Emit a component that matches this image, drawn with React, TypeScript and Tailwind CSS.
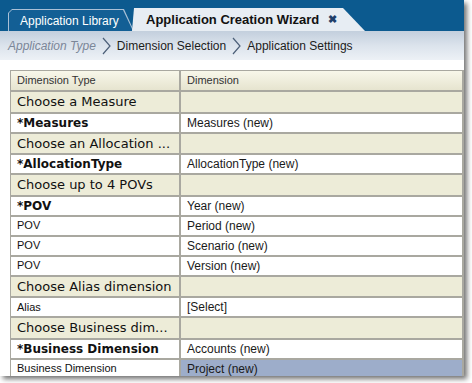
import React from "react";

type Row =
  | { kind: "section"; label: string }
  | { kind: "item"; label: string; value: string; bold?: boolean; selected?: boolean };

const rows: Row[] = [
  { kind: "section", label: "Choose a Measure" },
  { kind: "item", label: "*Measures", value: "Measures (new)", bold: true },
  { kind: "section", label: "Choose an Allocation ..." },
  { kind: "item", label: "*AllocationType", value: "AllocationType (new)", bold: true },
  { kind: "section", label: "Choose up to 4 POVs" },
  { kind: "item", label: "*POV", value: "Year (new)", bold: true },
  { kind: "item", label: "POV", value: "Period (new)" },
  { kind: "item", label: "POV", value: "Scenario (new)" },
  { kind: "item", label: "POV", value: "Version (new)" },
  { kind: "section", label: "Choose Alias dimension" },
  { kind: "item", label: "Alias", value: "[Select]" },
  { kind: "section", label: "Choose Business dim..." },
  { kind: "item", label: "*Business Dimension", value: "Accounts (new)", bold: true },
  { kind: "item", label: "Business Dimension", value: "Project (new)", selected: true },
];

const tahoma = "font-['Liberation_Sans',Arial,sans-serif]";
const verdana = "font-['DejaVu_Sans',Verdana,sans-serif]";
const cell = "border border-[#a9a8a0] h-[20px] px-[6px] whitespace-nowrap overflow-hidden";

const Chevron = () => (
  <svg width="9" height="18" viewBox="0 0 9 18" className="mx-[6px] shrink-0">
    <path d="M1 1 L8 9 L1 17" fill="none" stroke="#4c5f78" strokeWidth="1.2" />
  </svg>
);

const App = () => {
  return (
    <div className="w-[472px] h-[383px] bg-white">
      <div className="w-[464px] h-[376px] overflow-hidden bg-white shadow-[3px_3px_5px_rgba(0,0,0,0.55)]">
        {/* tab strip */}
        <div className="h-[31px] bg-[#0c5a8f] flex items-end pl-[8px]">
          <div className="relative h-[22px] w-[126px] bg-[#a9c0d6] [clip-path:polygon(0_4px,4px_0,116px_0,126px_100%,0_100%)]">
            <div
              className={`absolute inset-[1px] bottom-0 bg-[#135f95] [clip-path:polygon(0_3px,3px_0,114px_0,124px_100%,0_100%)] flex items-center pl-[11px] text-white text-[12px] ${tahoma}`}
            >
              Application Library
            </div>
          </div>
          <div
            className={`h-[23px] w-[233px] -ml-[2px] bg-[#e7edf3] [clip-path:polygon(0_100%,2px_0,211px_0,233px_100%)] flex items-center pl-[14px] text-[13px] font-bold text-[#111] ${tahoma}`}
          >
            Application Creation Wizard
            <span className="ml-[9px] text-[11px] text-[#1f3f6a]">✖</span>
          </div>
        </div>

        {/* train / breadcrumb */}
        <div
          className={`h-[29px] bg-gradient-to-b from-[#c3cfdd] via-[#dbe3ec] to-[#edf1f6] flex items-center pl-[8px] text-[12px] ${tahoma}`}
        >
          <span className="italic text-[#7b8698]">Application Type</span>
          <Chevron />
          <span className="text-[#1c1c1c]">Dimension Selection</span>
          <Chevron />
          <span className="text-[#1c1c1c]">Application Settings</span>
        </div>

        {/* table */}
        <div className="pt-[10px] pl-[10px]">
          <table className="border-separate border-spacing-0 table-fixed w-[480px]">
            <colgroup>
              <col className="w-[170px]" />
              <col className="w-[283px]" />
              <col className="w-[27px]" />
            </colgroup>
            <thead>
              <tr className={`text-[11px] text-[#333] ${tahoma}`}>
                <th className={`${cell} h-[21px] font-normal text-left px-[3px] bg-gradient-to-b from-[#f8f7ea] to-[#e6e4cf]`}>
                  Dimension Type
                </th>
                <th className={`${cell} h-[21px] font-normal text-left px-[3px] bg-gradient-to-b from-[#f8f7ea] to-[#e6e4cf]`}>
                  Dimension
                </th>
                <th className={`${cell} h-[21px] bg-gradient-to-b from-[#f8f7ea] to-[#e6e4cf]`}></th>
              </tr>
            </thead>
            <tbody>
              {rows.map((r, i) =>
                r.kind === "section" ? (
                  <tr key={i} className="bg-[#edecd8]">
                    <td className={`${cell} text-[13px] text-[#111] ${verdana}`}>{r.label}</td>
                    <td className={cell}></td>
                    <td className={cell}></td>
                  </tr>
                ) : (
                  <tr key={i} className="bg-white">
                    <td
                      className={`${cell} text-[#111] ${
                        r.bold ? `font-bold text-[12px] ${verdana}` : `text-[11px] ${tahoma}`
                      }`}
                    >
                      {r.label}
                    </td>
                    <td
                      className={`${cell} text-[12px] text-[#1a1a1a] ${tahoma} ${
                        r.selected ? "bg-[#9dadca]" : ""
                      }`}
                    >
                      {r.value}
                    </td>
                    <td className={cell}></td>
                  </tr>
                )
              )}
            </tbody>
          </table>
        </div>
      </div>
    </div>
  );
};

export default App;
